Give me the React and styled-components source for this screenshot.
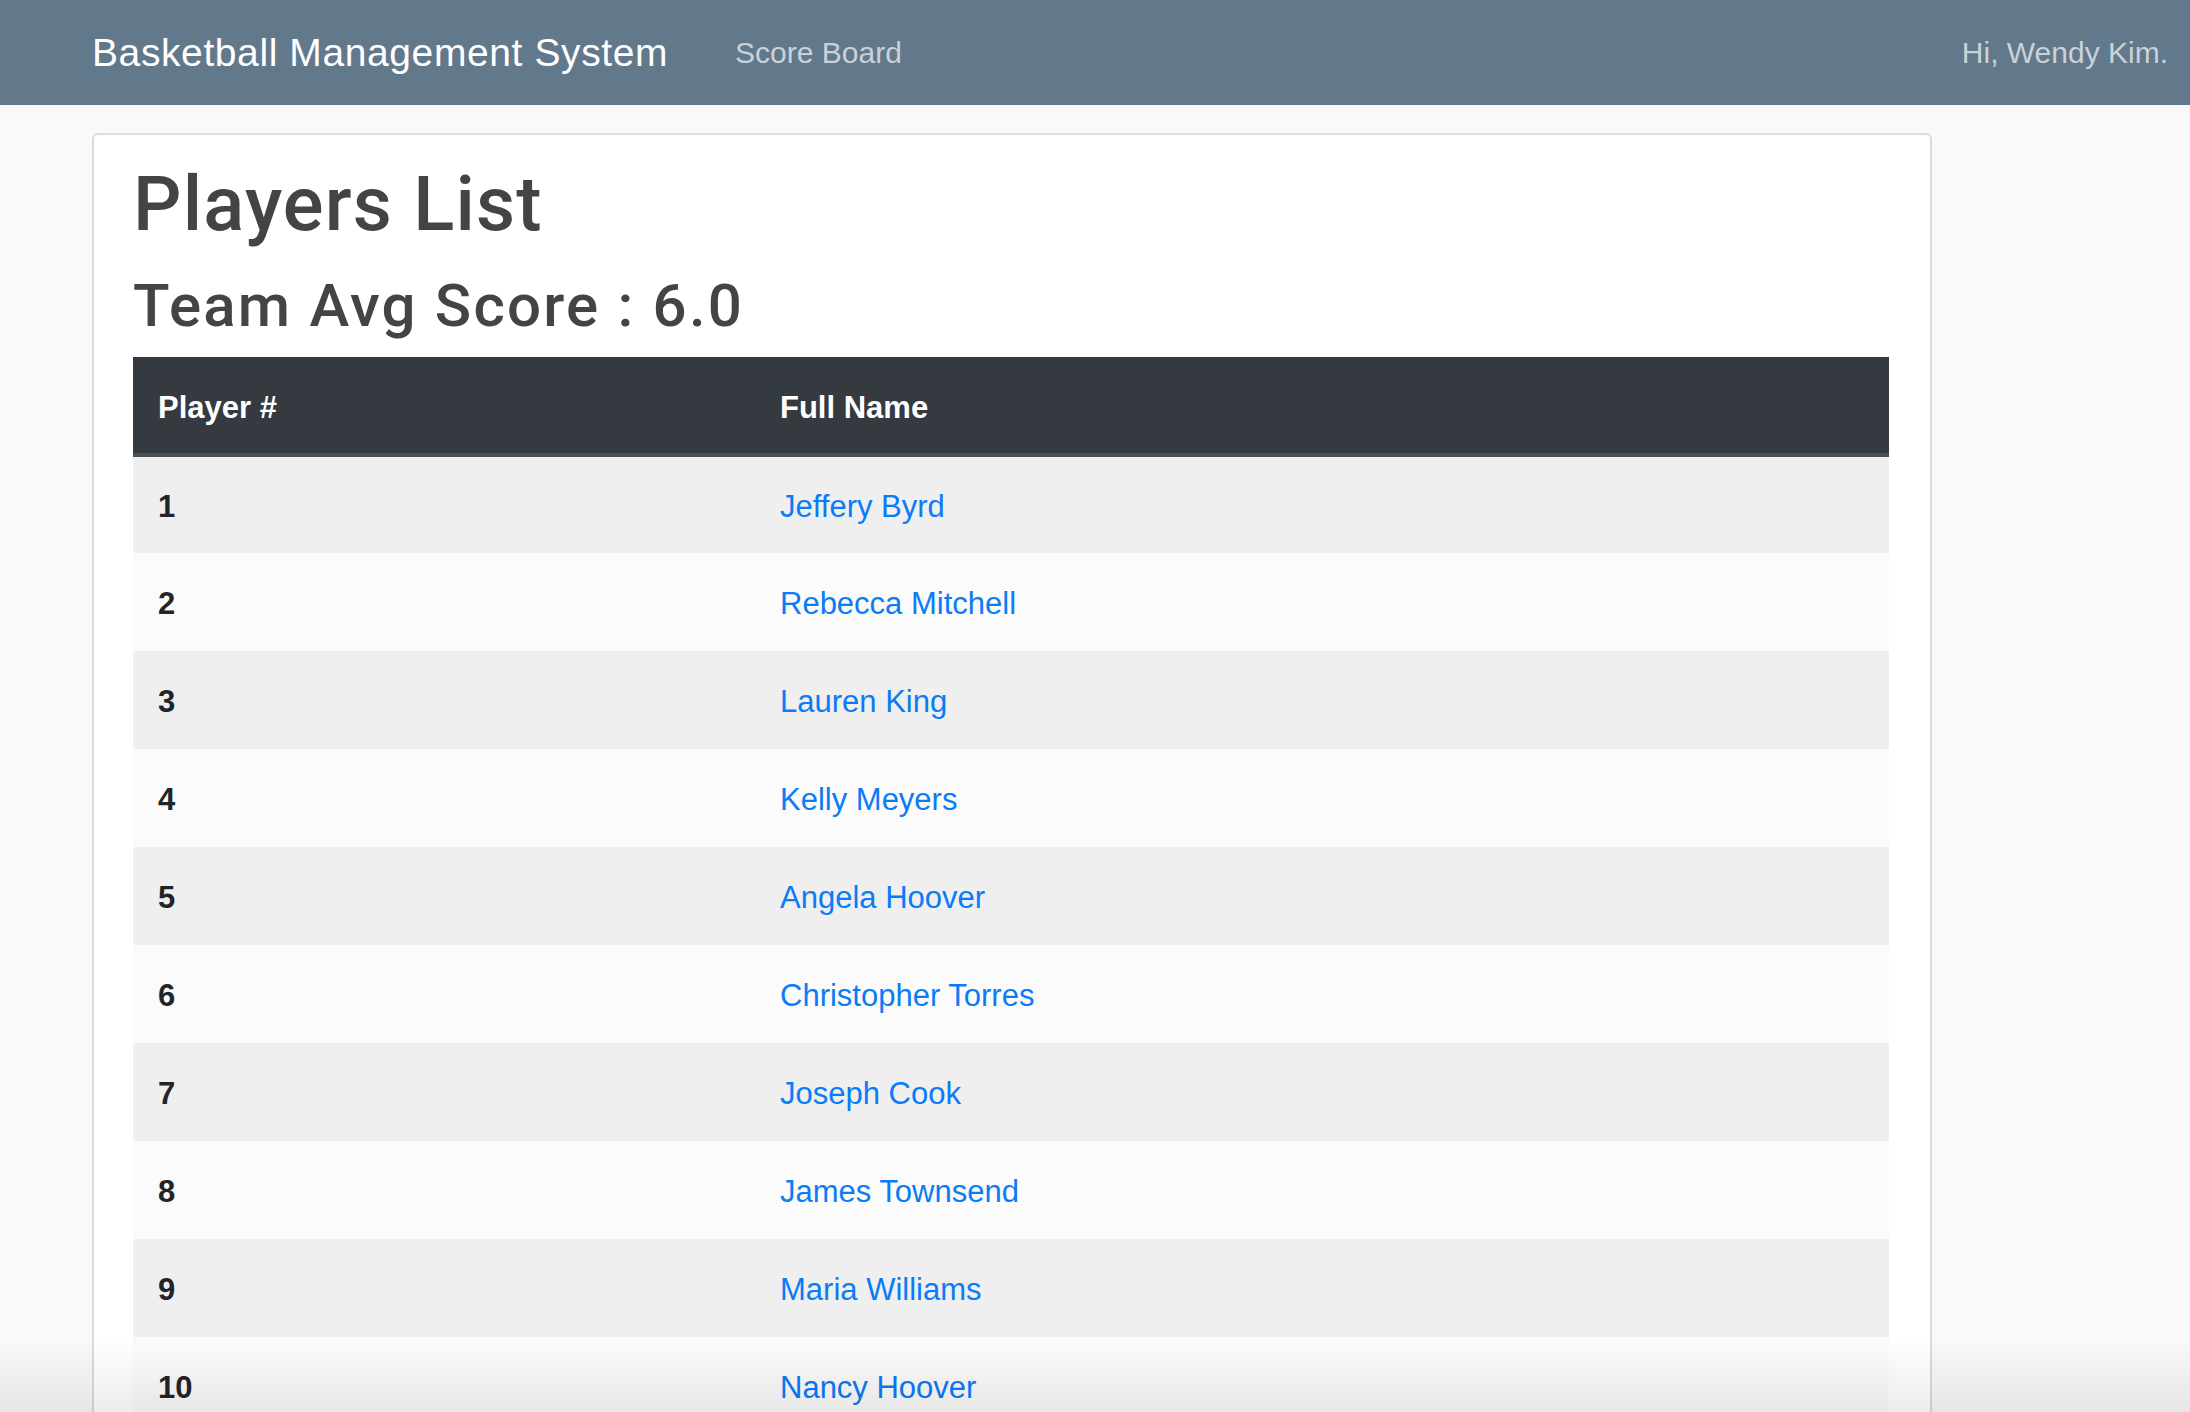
import styled, { createGlobalStyle } from "styled-components";

const GlobalStyle = createGlobalStyle`
  body {
    margin: 0;
    background-color: #f9f9f9;
    font-family: "Liberation Sans", Arial, sans-serif;
    color: #212529;
  }
`;

const Navbar = styled.nav`
  display: flex;
  align-items: center;
  height: 105px;
  padding: 0 22px 0 92px;
  background-color: #62788b;
`;

const Brand = styled.a`
  font-size: 39px;
  letter-spacing: 0.6px;
  color: #fff;
  text-decoration: none;
`;

const NavLink = styled.a`
  margin-left: ${(p) => (p.$right ? "auto" : "67px")};
  font-size: 30px;
  color: #cad2d9;
  text-decoration: none;
`;

const Card = styled.main`
  width: 1840px;
  box-sizing: border-box;
  margin: 28px 0 0 92px;
  padding: 24px 39px 0;
  background-color: #fff;
  border: 2px solid #dcdcdc;
  border-radius: 6px;
`;

const Title = styled.h1`
  margin: 0 0 20px;
  font-family: Roboto, "Liberation Sans", sans-serif;
  font-size: 76px;
  font-weight: 500;
  line-height: 1.2;
  letter-spacing: ${(p) => p.$spacing || "0"};
  color: #444;
`;

const SubTitle = styled(Title).attrs({ as: "h2" })`
  margin: 0 0 15px;
  font-size: 60px;
`;

const Table = styled.table`
  width: 1756px;
  border-collapse: collapse;
  font-size: 31px;
`;

const HeadCell = styled.th`
  width: ${(p) => p.$width || "auto"};
  height: 98px;
  padding: 5px 25px 0;
  box-sizing: border-box;
  text-align: left;
  color: #fff;
  font-weight: 700;
  background-color: #343a40;
  border-bottom: 4px solid #454d55;
`;

const Row = styled.tr`
  background-color: ${(p) => (p.$odd ? "#efefef" : "#fbfbfb")};
`;

const Cell = styled.td`
  height: 98px;
  padding: 3px 25px 0;
  box-sizing: border-box;
  font-weight: ${(p) => (p.$bold ? 700 : 400)};
`;

const NameLink = styled.a`
  color: #0b7bf6;
  text-decoration: none;
`;

const BottomShade = styled.div`
  position: fixed;
  left: 0;
  right: 0;
  bottom: 0;
  height: 75px;
  pointer-events: none;
  background: linear-gradient(rgba(0, 0, 0, 0), rgba(0, 0, 0, 0.075));
`;

const players = [
  "Jeffery Byrd",
  "Rebecca Mitchell",
  "Lauren King",
  "Kelly Meyers",
  "Angela Hoover",
  "Christopher Torres",
  "Joseph Cook",
  "James Townsend",
  "Maria Williams",
  "Nancy Hoover",
];

export default function App() {
  return (
    <>
      <GlobalStyle />
      <Navbar>
        <Brand href="#">Basketball Management System</Brand>
        <NavLink href="#">Score Board</NavLink>
        <NavLink $right>Hi, Wendy Kim.</NavLink>
      </Navbar>
      <Card>
        <Title $spacing="1.2px">Players List</Title>
        <SubTitle $spacing="2.2px">Team Avg Score : 6.0</SubTitle>
        <Table>
          <thead>
            <tr>
              <HeadCell $width="622px">Player #</HeadCell>
              <HeadCell>Full Name</HeadCell>
            </tr>
          </thead>
          <tbody>
            {players.map((name, i) => (
              <Row key={name} $odd={i % 2 === 0}>
                <Cell $bold>{i + 1}</Cell>
                <Cell>
                  <NameLink href="#">{name}</NameLink>
                </Cell>
              </Row>
            ))}
          </tbody>
        </Table>
      </Card>
      <BottomShade />
    </>
  );
}
